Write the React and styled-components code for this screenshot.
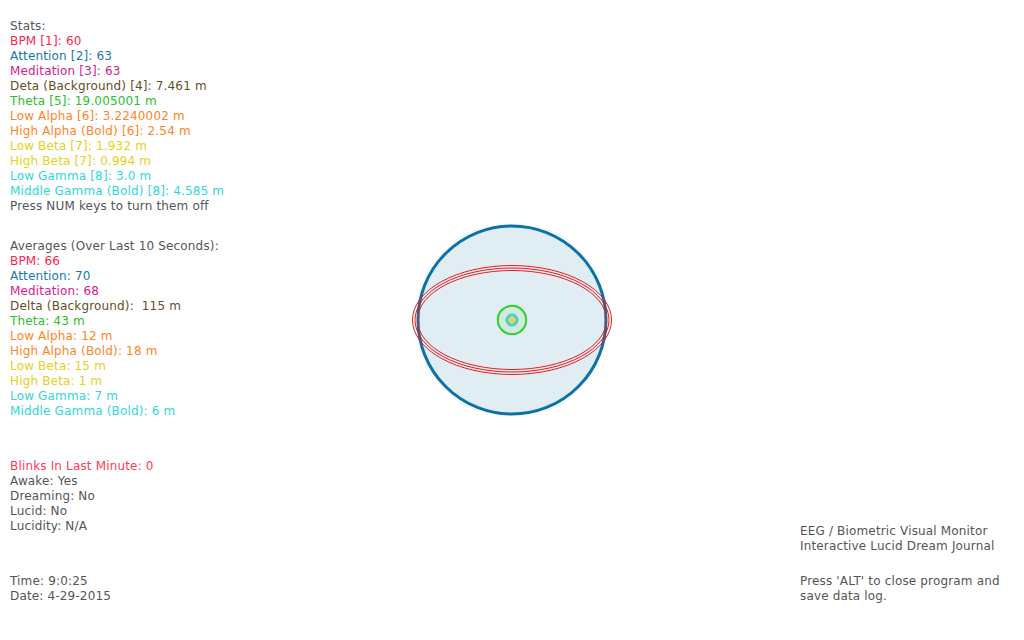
import styled, { createGlobalStyle } from "styled-components";

const GlobalStyle = createGlobalStyle`
  html, body, #root {
    margin: 0;
    height: 100%;
    background: #fff;
  }
  body {
    font-family: "DejaVu Sans", Verdana, sans-serif;
    font-size: 12px;
    line-height: 15px;
    letter-spacing: 0.16px;
    color: #555555;
  }
`;

const Screen = styled.div`
  display: grid;
  grid-template-columns: 1fr 200px 1fr;
  width: 1024px;
  height: 640px;
  box-sizing: border-box;
`;

const LeftColumn = styled.div`
  display: flex;
  flex-direction: column;
  padding: 19px 0 0 10px;
`;

const Block = styled.div`
  display: flex;
  flex-direction: column;
  margin-top: ${(p) => p.gap || 0}px;
`;

const Line = styled.div`
  white-space: pre;
  color: ${(p) => p.color || "#555555"};
  margin-top: ${(p) => p.gap || 0}px;
`;

const Monitor = styled.svg`
  align-self: center;
  display: block;
`;

const RightColumn = styled.div`
  align-self: end;
  display: flex;
  flex-direction: column;
  padding: 0 0 36px 188px;
`;

const C = {
  bpm: "#ff2150",
  attention: "#1878a8",
  meditation: "#d8208a",
  delta: "#5f5028",
  theta: "#2cc02c",
  alpha: "#ff8428",
  beta: "#e6d020",
  gamma: "#30d8d8",
  blink: "#ff3a58",
};

const stats = [
  ["BPM [1]: 60", C.bpm],
  ["Attention [2]: 63", C.attention],
  ["Meditation [3]: 63", C.meditation],
  ["Deta (Background) [4]: 7.461 m", C.delta],
  ["Theta [5]: 19.005001 m", C.theta],
  ["Low Alpha [6]: 3.2240002 m", C.alpha],
  ["High Alpha (Bold) [6]: 2.54 m", C.alpha],
  ["Low Beta [7]: 1.932 m", C.beta],
  ["High Beta [7]: 0.994 m", C.beta],
  ["Low Gamma [8]: 3.0 m", C.gamma],
  ["Middle Gamma (Bold) [8]: 4.585 m", C.gamma],
];

const averages = [
  ["BPM: 66", C.bpm],
  ["Attention: 70", C.attention],
  ["Meditation: 68", C.meditation],
  ["Delta (Background):  115 m", C.delta],
  ["Theta: 43 m", C.theta],
  ["Low Alpha: 12 m", C.alpha],
  ["High Alpha (Bold): 18 m", C.alpha],
  ["Low Beta: 15 m", C.beta],
  ["High Beta: 1 m", C.beta],
  ["Low Gamma: 7 m", C.gamma],
  ["Middle Gamma (Bold): 6 m", C.gamma],
];

function App() {
  return (
    <>
      <GlobalStyle />
      <Screen>
        <LeftColumn>
          <Block>
            <Line>Stats:</Line>
            {stats.map(([t, c]) => (
              <Line key={t} color={c}>{t}</Line>
            ))}
            <Line>Press NUM keys to turn them off</Line>
          </Block>
          <Block gap={25}>
            <Line>Averages (Over Last 10 Seconds):</Line>
            {averages.map(([t, c]) => (
              <Line key={t} color={c}>{t}</Line>
            ))}
          </Block>
          <Block gap={40}>
            <Line color={C.blink}>Blinks In Last Minute: 0</Line>
            <Line>Awake: Yes</Line>
            <Line>Dreaming: No</Line>
            <Line>Lucid: No</Line>
            <Line>Lucidity: N/A</Line>
          </Block>
          <Block gap={40}>
            <Line>Time: 9:0:25</Line>
            <Line>Date: 4-29-2015</Line>
          </Block>
        </LeftColumn>

        <Monitor width="200" height="200" viewBox="0 0 200 200">
          <circle cx="100" cy="100" r="94" fill="#e0eef3" stroke="#0a72a6" strokeWidth="3" />
          <ellipse cx="100" cy="100" rx="99.5" ry="54.5" fill="none" stroke="#ee1a1a" strokeWidth="1" />
          <ellipse cx="100" cy="100" rx="97" ry="52" fill="none" stroke="#ee1a1a" strokeWidth="1" />
          <ellipse cx="100" cy="100" rx="94.5" ry="49.5" fill="none" stroke="#ee1a1a" strokeWidth="1" />
          <circle cx="100" cy="100" r="14.2" fill="#d2eadc" stroke="#2ed02e" strokeWidth="2" />
          <circle cx="100" cy="100" r="5.5" fill="#c8dcd8" stroke="#38d0d0" strokeWidth="2" />
          <circle cx="100" cy="100" r="4" fill="none" stroke="#7a9090" strokeWidth="0.6" />
          <circle cx="100" cy="100" r="3" fill="#d8e040" />
        </Monitor>

        <RightColumn>
          <Line>EEG / Biometric Visual Monitor</Line>
          <Line>Interactive Lucid Dream Journal</Line>
          <Line gap={20}>Press 'ALT' to close program and</Line>
          <Line>save data log.</Line>
        </RightColumn>
      </Screen>
    </>
  );
}

export default App;
